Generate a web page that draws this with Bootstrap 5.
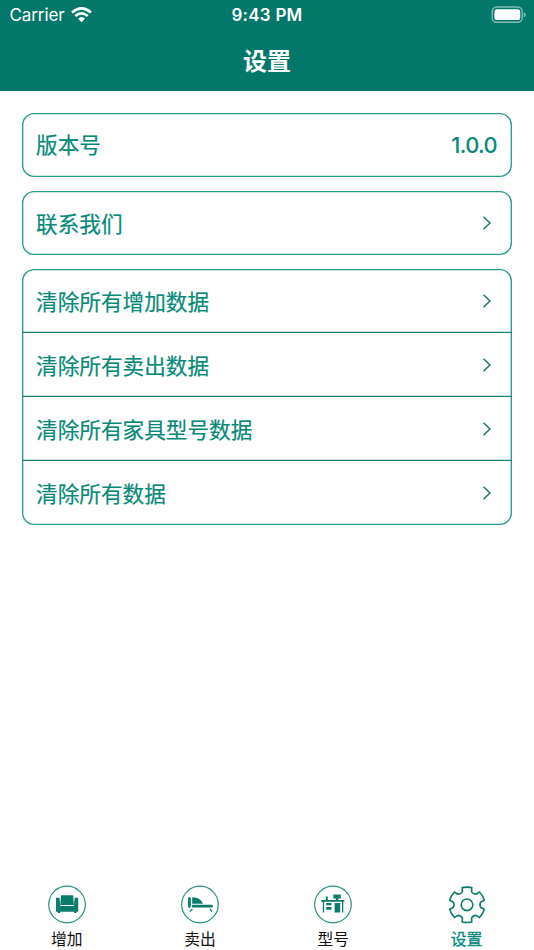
<!DOCTYPE html>
<html lang="zh-CN">
<head>
<meta charset="utf-8">
<meta name="viewport" content="width=device-width, initial-scale=1">
<title>设置</title>
<link href="https://cdn.jsdelivr.net/npm/bootstrap@5.3.0/dist/css/bootstrap.min.css" rel="stylesheet">
<style>
:root { --brand: #03786a; --ink: #07897a; --edge: #2a9d90; }
body { font-family: Inter, "Noto Sans CJK SC", sans-serif; }
.app-head { background: var(--brand); height: 91.3px; }
.status { height: 30px; font-size: 17px; line-height: 30px; }
.carrier { width: 200px; padding-left: 9.5px; letter-spacing: -.1px; }
.carrier svg { margin-left: 6px; }
.clock { font-weight: 600; letter-spacing: .25px; }
.battery { width: 200px; padding-right: 8px; }
.app-title { font-size: 24px; font-weight: 700; line-height: 30px; padding-top: 16.6px; }
.settings { padding: 21.4px 22px 0; gap: 14.4px; }
.group { border-radius: 12px; box-shadow: inset 0 0 0 1.35px var(--edge); }
.entry { height: 64px; padding: 2px 15px 0 14px; font-size: 21.65px; color: var(--ink); -webkit-text-stroke: .2px var(--ink); }
.entry:not(:last-child) { box-shadow: inset 0 -1.35px 0 #17836f; }
.entry:first-child:not(:last-child) { height: 63.5px; }
.version { font-weight: 500; font-size: 21.8px; letter-spacing: -.6px; -webkit-text-stroke: 0; }
.chev { margin-right: 5px; margin-bottom: 2px; }
.tab { font-size: 15.8px; line-height: 20px; color: #111; text-decoration: none; padding-left: .4px; }
.tab svg { margin-bottom: 6px; }
.tab.active { color: var(--ink); -webkit-text-stroke: .3px var(--ink); padding-right: 1px; }
.tabs { height: 66px; }
</style>
<script src="https://cdn.jsdelivr.net/npm/bootstrap@5.3.0/dist/js/bootstrap.bundle.min.js" defer></script>
</head>
<body class="bg-white">
<svg class="d-none"><symbol id="chevron" viewBox="0 0 10 16"><path d="M1.5 1.8 8 8 1.5 14.2" fill="none" stroke="#137565" stroke-width="1.4"/></symbol></svg>
<div class="d-flex flex-column vh-100 overflow-hidden">
  <header class="app-head text-white flex-shrink-0">
    <div class="status d-flex justify-content-between align-items-center">
      <div class="carrier d-flex align-items-center">
        <span>Carrier</span>
        <svg width="21" height="16" viewBox="0 0 21 16" fill="none" stroke="#fff" stroke-width="2.7"><path d="M1 5.5Q10.500-2.700 20 5.500M4.300 9Q10.500 3.700 16.700 9"/><path d="M7 11.600Q10.500 8.600 14 11.600L10.500 15.200Z" fill="#fff" stroke="none"/></svg>
      </div>
      <div class="clock">9:43 PM</div>
      <div class="battery d-flex justify-content-end">
        <svg width="35" height="18" viewBox="0 0 35 18"><rect x="1.200" y="1" width="30" height="15.300" rx="4.500" fill="none" stroke="#fff" stroke-opacity=".5" stroke-width="1.400"/><rect x="3.400" y="3.200" width="25.800" height="10.900" rx="2.600" fill="#fff"/><path d="M32.800 6.200q1.900.8 1.900 2.500t-1.900 2.500z" fill="#fff" fill-opacity=".55"/></svg>
      </div>
    </div>
    <h1 class="app-title text-center m-0">设置</h1>
  </header>
  <main class="settings d-flex flex-column flex-grow-1">
    <section class="group"><div class="entry d-flex align-items-center justify-content-between"><span>版本号</span><span class="version">1.0.0</span></div></section>
    <section class="group"><div class="entry d-flex align-items-center justify-content-between"><span>联系我们</span><svg class="chev" width="10" height="16"><use href="#chevron"/></svg></div></section>
    <section class="group">
      <div class="entry d-flex align-items-center justify-content-between"><span>清除所有增加数据</span><svg class="chev" width="10" height="16"><use href="#chevron"/></svg></div>
      <div class="entry d-flex align-items-center justify-content-between"><span>清除所有卖出数据</span><svg class="chev" width="10" height="16"><use href="#chevron"/></svg></div>
      <div class="entry d-flex align-items-center justify-content-between"><span>清除所有家具型号数据</span><svg class="chev" width="10" height="16"><use href="#chevron"/></svg></div>
      <div class="entry d-flex align-items-center justify-content-between"><span>清除所有数据</span><svg class="chev" width="10" height="16"><use href="#chevron"/></svg></div>
    </section>
  </main>
  <nav class="tabs row g-0 flex-shrink-0 text-center">
    <a class="tab col d-flex flex-column align-items-center" href="#">
      <svg width="40" height="40" viewBox="0 0 40 40"><circle cx="20" cy="20.500" r="18.300" fill="none" stroke="#2a9182" stroke-width="1.200"/><g fill="#0b7b6c"><path d="M14.700 11.200h10.800q.8 0 .8.800l.6 9H13.300l.6-9q0-.8.800-.8z"/><path d="M9 13.800h3.500l.8 8.100h13.600l.8-8.100h3.500V27.700h-1.700v1.300h-2.400v-1.300H13.200v1.300h-2.400v-1.300H9z"/></g></svg>
      <span>增加</span>
    </a>
    <a class="tab col d-flex flex-column align-items-center" href="#">
      <svg width="40" height="40" viewBox="0 0 40 40"><circle cx="20" cy="20.500" r="18.300" fill="none" stroke="#2a9182" stroke-width="1.200"/><g fill="#0b7b6c"><rect x="8" y="13.300" width="2.800" height="10.400" rx="1.100"/><path d="M12.200 13.300q7.800-.2 10.700 6.400H12.200z"/><rect x="11.800" y="20.700" width="21" height="2.900" rx="1.100"/></g><path d="m12.400 25-2.600 2.600M30 25l2 2.600" stroke="#0b7b6c" stroke-width="1.300"/></svg>
      <span>卖出</span>
    </a>
    <a class="tab col d-flex flex-column align-items-center" href="#">
      <svg width="40" height="40" viewBox="0 0 40 40"><circle cx="20" cy="20.500" r="18.300" fill="none" stroke="#2a9182" stroke-width="1.200"/><g fill="#0b7b6c"><path d="M8.300 16h23v1.700h-23zM9.800 17.500h1.300v10.900H9.800zM29 17.500h1.300v10.900H29zM12.800 12.500h2v3.700h-2zM20.300 10.500h7.500v4.100h-2.400v1.600h-2.600v-1.600h-2.500zM13.200 18.900h5.300v2.400h-5.300zM13.200 23h5.300v2.700h-5.300zM21.600 19h5.600v9.400h-5.600z"/></g></svg>
      <span>型号</span>
    </a>
    <a class="tab active col d-flex flex-column align-items-center" href="#" aria-current="page">
      <svg width="40" height="40" viewBox="-20 -20.800 40 40"><path d="M-4.800-17.200Q0-18.200 4.800-17.200L4.700-15.600A3.850 3.850 0 0 0 11.160-11.870L12.500-12.760Q16-9.200 17.300-4.440L15.860-3.730A3.850 3.850 0 0 0 15.860 3.730L17.300 4.440Q16 9.200 12.500 12.760L11.160 11.870A3.850 3.850 0 0 0 4.700 15.600L4.800 17.200Q0 18.200-4.800 17.200L-4.700 15.600A3.850 3.850 0 0 0-11.160 11.870L-12.500 12.760Q-16 9.200-17.300 4.440L-15.860 3.730A3.850 3.850 0 0 0-15.860-3.730L-17.300-4.440Q-16-9.200-12.500-12.760L-11.160-11.870A3.850 3.850 0 0 0-4.700-15.600Z" fill="none" stroke="#0b7b6c" stroke-width="1.600" stroke-linejoin="round"/><circle r="5.800" fill="none" stroke="#0b7b6c" stroke-width="1.600"/></svg>
      <span>设置</span>
    </a>
  </nav>
</div>
</body>
</html>
